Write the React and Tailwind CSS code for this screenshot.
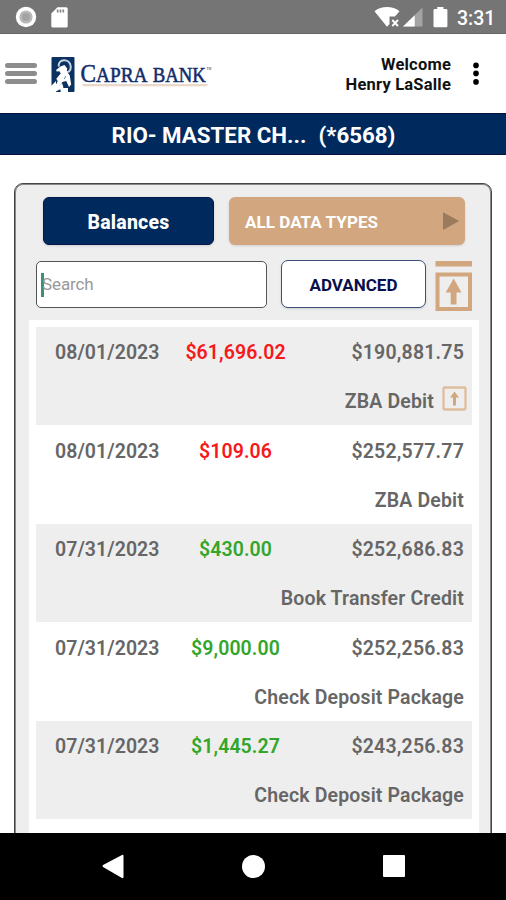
const transactions = [
  { date: "08/01/2023", amount: "$61,696.02", debit: true, balance: "$190,881.75", type: "ZBA Debit", icon: true },
  { date: "08/01/2023", amount: "$109.06", debit: true, balance: "$252,577.77", type: "ZBA Debit" },
  { date: "07/31/2023", amount: "$430.00", debit: false, balance: "$252,686.83", type: "Book Transfer Credit" },
  { date: "07/31/2023", amount: "$9,000.00", debit: false, balance: "$252,256.83", type: "Check Deposit Package" },
  { date: "07/31/2023", amount: "$1,445.27", debit: false, balance: "$243,256.83", type: "Check Deposit Package" },
];

function StatusBar() {
  return (
    <div className="flex h-[34px] shrink-0 items-center border-b border-[#666] bg-[#757575] text-white">
      <svg className="ml-[15px]" width="22" height="22" viewBox="0 0 22 22">
        <circle cx="11" cy="11" r="10.2" fill="#fff" />
        <circle cx="11" cy="11" r="6.6" fill="#b9b9b9" />
        <circle cx="11" cy="11" r="4" fill="#a3a3a3" />
      </svg>
      <svg className="mt-0.5 ml-[14px]" width="17" height="21" viewBox="0 0 17 21">
        <path d="M6.5 0.3H15.2Q16.7 0.3 16.7 1.8V18.9Q16.7 20.4 15.2 20.4H1.8Q.3 20.4 .3 18.9V6.5Z" fill="#fff" />
        <path d="M6.7 2.5V5.5M9.5 2.5V5.5M12.3 2.5V5.5" stroke="#858585" strokeWidth="1.7" />
      </svg>
      <svg className="ml-auto" width="27" height="22" viewBox="0 0 27 22">
        <path d="M.5 5.2C7.5-.3 18.5-.3 25.5 5.2L21 10.5H15.5V18L13 20.7Z" fill="#fff" />
        <path d="M18.3 14L24 20M24 14L18.3 20" stroke="#fff" strokeWidth="1.9" />
      </svg>
      <svg className="ml-px" width="22" height="22" viewBox="0 0 22 22">
        <path d="M20.5 1.5V20.5H1Z" fill="#a4a4a4" />
        <path d="M12.7 9.2V20.5H1Z" fill="#fff" />
      </svg>
      <svg className="ml-[9px]" width="15" height="22" viewBox="0 0 15 22">
        <path d="M4.2 1.1H10.5V3H13.2Q14.4 3 14.4 4.2V20Q14.4 21.2 13.2 21.2H1.7Q.5 21.2 .5 20V4.2Q.5 3 1.7 3H4.2Z" fill="#fff" />
      </svg>
      <span className="mr-[11px] ml-[9px] w-[38px] pt-[5px] text-[19.5px] leading-none font-medium whitespace-nowrap">3:31</span>
    </div>
  );
}

function CapraLogo() {
  return (
    <svg className="ml-[13px]" width="164" height="38" viewBox="50 56 164 38" role="img" aria-label="Capra Bank">
      <rect x="51.5" y="57" width="23" height="35" rx="1" fill="#0b3261" />
      <path d="M51 93V86L56 81V93ZM52 91.5L62 83L63.5 87.5L54 92.5ZM60 88H68V93H61Z" fill="#fff" />
      <path d="M58.8 66.6C57.5 58.5 69.7 57.8 70.7 66.2C71.2 72 66.8 73.3 65.3 70.6" fill="none" stroke="#c5d8e4" strokeWidth="1.9" />
      <path d="M60.4 66.6L64.5 65L67.2 68.4L66.7 71.5L69.7 75.3L71.2 84.5L69 87L66.2 81L62.4 82L58.5 87L53.5 89.7L57.7 81.2L56.3 78.7L60.7 73.5L59.4 71.3L56.7 71.4L56.1 69.9Z" fill="#fff" />
      <path d="M65.7 76L64.2 79.2" stroke="#7890aa" strokeWidth="1" />
      <g fill="#132c6b" stroke="#132c6b" strokeWidth=".55" fontFamily="'Liberation Serif', serif">
        <text x="80.5" y="81.5" fontSize="25" textLength="15.5" lengthAdjust="spacingAndGlyphs">C</text>
        <text x="96" y="81.5" fontSize="21.5" textLength="51.5" lengthAdjust="spacingAndGlyphs">APRA</text>
        <text x="152.7" y="81.5" fontSize="21.5" textLength="53" lengthAdjust="spacingAndGlyphs">BANK</text>
        <text x="206.5" y="69.5" fontSize="3.2" strokeWidth="0">TM</text>
      </g>
      <rect x="82.5" y="84" width="125" height="2.3" fill="#ead8cb" />
    </svg>
  );
}

function Header() {
  return (
    <header className="flex h-[79px] shrink-0 items-start bg-white pt-[22px]">
      <div className="mt-[7px] ml-[5px] flex w-8 flex-col gap-[3px]">
        <span className="h-[5px] rounded-full bg-[#8d8d8d]" />
        <span className="h-[5px] rounded-full bg-[#8d8d8d]" />
        <span className="h-[5px] rounded-full bg-[#8d8d8d]" />
      </div>
      <CapraLogo />
      <div className="ml-auto -mt-px text-right text-[16.5px] leading-5 font-bold tracking-[.2px] whitespace-nowrap text-[#111]">
        <div>Welcome</div>
        <div>Henry LaSalle</div>
      </div>
      <svg className="mt-1.5 mr-[26px] ml-[21px]" width="8" height="24" viewBox="0 0 8 24">
        <circle cx="4" cy="3.4" r="2.8" />
        <circle cx="4" cy="11.4" r="2.8" />
        <circle cx="4" cy="19.9" r="2.8" />
      </svg>
    </header>
  );
}

function ScrollTopIcon() {
  return (
    <svg className="mt-px ml-[9px]" width="38" height="52" viewBox="0 0 38 52">
      <path d="M.5 0H37V5.5H.5Z" fill="#d2a67e" />
      <path d="M2.5 13.5H35V48H2.5Z" fill="none" stroke="#d2a67e" strokeWidth="4" />
      <path d="M18.7 17.5L26.5 31.5H21.5V43.5H15.7V31.5H10.7Z" fill="#d2a67e" />
    </svg>
  );
}

function Row({ item, shaded }) {
  return (
    <div className={`h-[98.5px] text-[19.5px] leading-6 font-semibold text-[#666] ${shaded ? "bg-[#eee]" : "bg-white"}`}>
      <div className="flex pt-[14.5px]">
        <span className="w-[122px] pl-[19px] tracking-[.05px]">{item.date}</span>
        <span className={`w-[155px] text-center tracking-[.1px] ${item.debit ? "text-[#f5191d]" : "text-[#32a62a]"}`}>{item.amount}</span>
        <span className="ml-auto pr-2 tracking-[.2px]">{item.balance}</span>
      </div>
      <div className="flex items-center justify-end pt-[25px] pr-2 tracking-[.15px]">
        <span>{item.type}</span>
        {item.icon && (
          <svg className="-mt-2 -mr-[3px] ml-2" width="25" height="25" viewBox="0 0 25 25">
            <rect x="1.5" y="1.5" width="22" height="22" rx="1" fill="none" stroke="#dfbd9e" strokeWidth="2.3" />
            <path d="M12.5 5.5L17 11.5H14V19.5H11V11.5H8Z" fill="#d2a67e" />
          </svg>
        )}
      </div>
    </div>
  );
}

function Panel() {
  return (
    <div className="mx-[14px] mt-7 h-[760px] rounded-[9px] border border-[#444] bg-[#eee] px-3.5 pt-[13px] shadow-[inset_0_0_0_1px_#888]">
      <div className="ml-3.5 flex gap-[15px] text-white">
        <button className="h-12 w-[171px] rounded-md border border-[#061650] bg-[#002a5e] pt-[3px] text-[19.5px] font-extrabold tracking-[.2px] shadow-sm">Balances</button>
        <button className="flex h-12 w-[236px] items-center justify-between rounded-md bg-[#d2a780] pr-[5px] pl-4 text-[17px] font-bold tracking-[.05px] shadow-sm">
          <span className="pt-[3px]">ALL DATA TYPES</span>
          <svg width="18" height="20" viewBox="0 0 18 20"><path d="M1 1.3L17.2 10L1 19Z" fill="#9b7b5e" /></svg>
        </button>
      </div>
      <div className="mt-[15px] ml-[7px] flex">
        <div className="mt-px flex h-[47px] w-[231px] items-center rounded-[5px] border-[1.5px] border-[#555] bg-white pl-1">
          <span className="h-6 w-[3px] bg-[#3c9279]" />
          <span className="-ml-[2px] pt-px text-[17px] tracking-[-.1px] text-[#999]">Search</span>
        </div>
        <button className="ml-3.5 h-12 w-[145px] rounded-[7px] border-[1.5px] border-[#3c5078] bg-white pt-[3px] text-[17px] font-bold text-[#07104d] shadow-sm">ADVANCED</button>
        <ScrollTopIcon />
      </div>
      <div className="mt-[7px] h-[560px] w-[450px] bg-white px-[7px] pt-[6.5px]">
        {transactions.map((item, i) => <Row key={i} item={item} shaded={i % 2 === 0} />)}
      </div>
    </div>
  );
}

export default function App() {
  return (
    <div className="flex h-[900px] w-[506px] flex-col overflow-hidden bg-white font-['Roboto',sans-serif]">
      <StatusBar />
      <Header />
      <div className="flex h-[42px] shrink-0 items-center justify-center gap-3 border-y border-[#09103f] bg-[#002a5e] pt-[3px] pl-px text-[22.3px] font-bold whitespace-nowrap text-white">
        <span>RIO- MASTER CH...</span>
        <span>(*6568)</span>
      </div>
      <main className="min-h-0 flex-1 overflow-hidden"><Panel /></main>
      <nav className="flex h-[67px] shrink-0 items-start bg-black pt-[21px]">
        <svg className="ml-[102px]" width="22" height="25" viewBox="0 0 22 25"><path d="M1 11Q0 12 1 13L20 24Q21.5 24.5 21.5 23V2Q21.5 .3 20 1Z" fill="#fff" /></svg>
        <span className="mt-px ml-[118px] size-[23px] rounded-full bg-white" />
        <span className="mt-px ml-[118px] h-[22px] w-[22px] rounded-[1px] bg-white" />
      </nav>
    </div>
  );
}
